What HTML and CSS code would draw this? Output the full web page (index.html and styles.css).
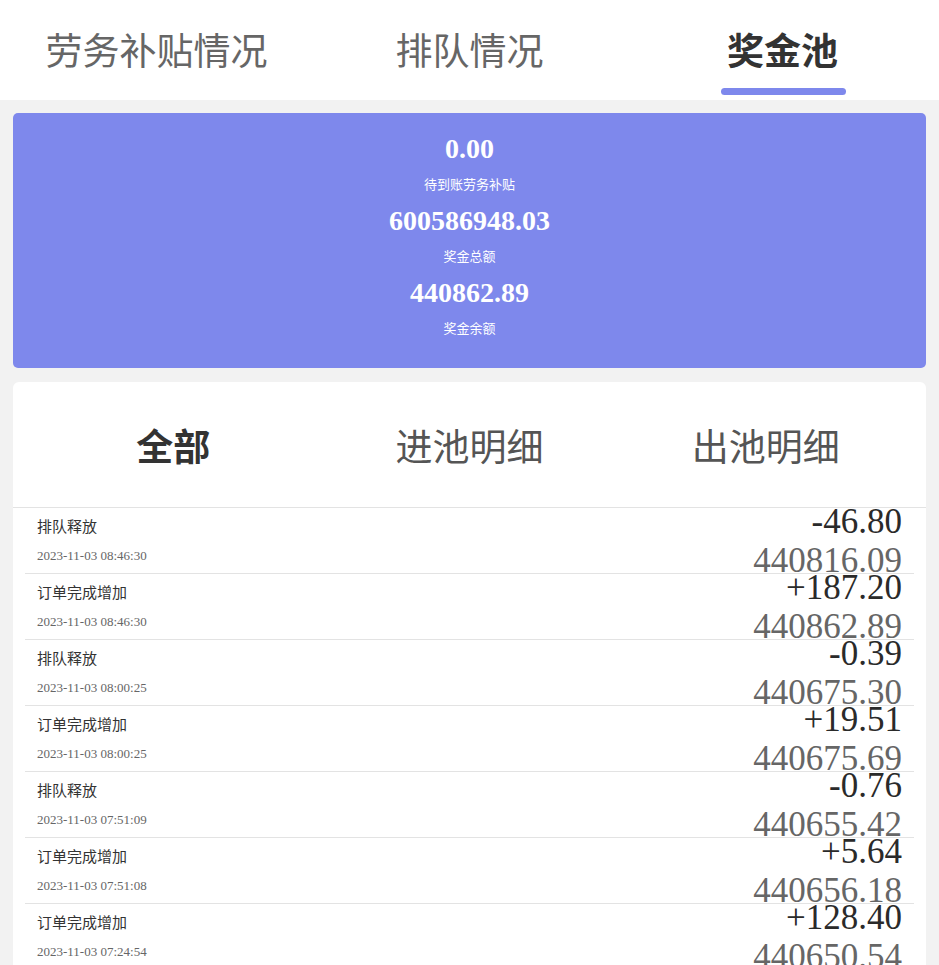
FILE: index.html
```html
<!DOCTYPE html>
<html lang="zh-CN">
<head>
<meta charset="utf-8">
<title>奖金池</title>
<link rel="stylesheet" href="styles.css">
</head>
<body>
<div class="page">
  <nav class="top-tabs">
    <div class="top-tab">劳务补贴情况</div>
    <div class="top-tab">排队情况</div>
    <div class="top-tab active">奖金池</div>
  </nav>

  <section class="summary">
    <div class="stat">
      <div class="stat-num">0.00</div>
      <div class="stat-label">待到账劳务补贴</div>
    </div>
    <div class="stat">
      <div class="stat-num">600586948.03</div>
      <div class="stat-label">奖金总额</div>
    </div>
    <div class="stat">
      <div class="stat-num">440862.89</div>
      <div class="stat-label">奖金余额</div>
    </div>
  </section>

  <section class="detail">
    <div class="sub-tabs">
      <div class="sub-tab active">全部</div>
      <div class="sub-tab">进池明细</div>
      <div class="sub-tab">出池明细</div>
    </div>
    <ul class="records">
      <li class="record">
        <div class="rec-left"><div class="rec-title">排队释放</div><div class="rec-date">2023-11-03 08:46:30</div></div>
        <div class="rec-right"><div class="rec-amount">-46.80</div><div class="rec-balance">440816.09</div></div>
      </li>
      <li class="record">
        <div class="rec-left"><div class="rec-title">订单完成增加</div><div class="rec-date">2023-11-03 08:46:30</div></div>
        <div class="rec-right"><div class="rec-amount">+187.20</div><div class="rec-balance">440862.89</div></div>
      </li>
      <li class="record">
        <div class="rec-left"><div class="rec-title">排队释放</div><div class="rec-date">2023-11-03 08:00:25</div></div>
        <div class="rec-right"><div class="rec-amount">-0.39</div><div class="rec-balance">440675.30</div></div>
      </li>
      <li class="record">
        <div class="rec-left"><div class="rec-title">订单完成增加</div><div class="rec-date">2023-11-03 08:00:25</div></div>
        <div class="rec-right"><div class="rec-amount">+19.51</div><div class="rec-balance">440675.69</div></div>
      </li>
      <li class="record">
        <div class="rec-left"><div class="rec-title">排队释放</div><div class="rec-date">2023-11-03 07:51:09</div></div>
        <div class="rec-right"><div class="rec-amount">-0.76</div><div class="rec-balance">440655.42</div></div>
      </li>
      <li class="record">
        <div class="rec-left"><div class="rec-title">订单完成增加</div><div class="rec-date">2023-11-03 07:51:08</div></div>
        <div class="rec-right"><div class="rec-amount">+5.64</div><div class="rec-balance">440656.18</div></div>
      </li>
      <li class="record">
        <div class="rec-left"><div class="rec-title">订单完成增加</div><div class="rec-date">2023-11-03 07:24:54</div></div>
        <div class="rec-right"><div class="rec-amount">+128.40</div><div class="rec-balance">440650.54</div></div>
      </li>
    </ul>
  </section>
</div>
</body>
</html>
```

FILE: styles.css
```css
* { box-sizing: border-box; }
html, body {
  margin: 0;
  padding: 0;
  background: #f2f2f2;
  font-family: "Noto Sans CJK SC", "Noto Sans", sans-serif;
  overflow: hidden;
}
.page {
  width: 939px;
  height: 965px;
  overflow: hidden;
}
.top-tabs {
  display: grid;
  grid-template-columns: repeat(3, 1fr);
  height: 100px;
  background: #fff;
}
.top-tab {
  position: relative;
  display: flex;
  align-items: center;
  justify-content: center;
  font-size: 37px;
  color: #666;
  line-height: 1;
  padding-bottom: 2px;
}
.top-tab.active {
  color: #333;
  font-weight: bold;
}
.top-tab.active::after {
  content: "";
  position: absolute;
  left: 50%;
  bottom: 5px;
  width: 125px;
  height: 7px;
  margin-left: -62px;
  border-radius: 4px;
  background: #7e88ec;
}
.summary {
  margin: 13px 13px 0;
  height: 255px;
  background: #7e88ec;
  border-radius: 5px;
  padding-top: 20px;
  display: flex;
  flex-direction: column;
  align-items: center;
  gap: 13px;
  color: #fff;
  text-align: center;
}
.stat-num {
  font-family: "Liberation Serif", serif;
  font-weight: bold;
  font-size: 28px;
  line-height: 32px;
}
.stat-label {
  margin-top: 11px;
  font-size: 13px;
  line-height: 16px;
}
.detail {
  margin: 14px 13px 0;
  background: #fff;
  border-radius: 6px;
  min-height: 600px;
}
.sub-tabs {
  display: grid;
  grid-template-columns: repeat(3, 1fr);
  padding: 0 12px;
  height: 126px;
  border-bottom: 1px solid #e3e3e3;
}
.sub-tab {
  display: flex;
  align-items: center;
  justify-content: center;
  font-size: 37px;
  color: #555;
  line-height: 1;
  padding-top: 2px;
}
.sub-tab.active {
  color: #333;
  font-weight: bold;
}
.records {
  list-style: none;
  margin: 0;
  padding: 0 12px;
}
.record {
  display: flex;
  justify-content: space-between;
  align-items: center;
  height: 66px;
  padding: 0 12px;
  border-bottom: 1px solid #e3e3e3;
}
.rec-left {
  display: flex;
  flex-direction: column;
}
.rec-title {
  font-size: 15px;
  line-height: 20px;
  color: #333;
}
.rec-date {
  margin-top: 10px;
  font-family: "Liberation Serif", serif;
  font-size: 13px;
  line-height: 20px;
  color: #666;
}
.rec-right {
  display: flex;
  flex-direction: column;
  align-items: flex-end;
  font-family: "Liberation Serif", serif;
  font-size: 35px;
  line-height: 39px;
}
.rec-amount { color: #2a2a2a; }
.rec-balance { color: #666; }
```
